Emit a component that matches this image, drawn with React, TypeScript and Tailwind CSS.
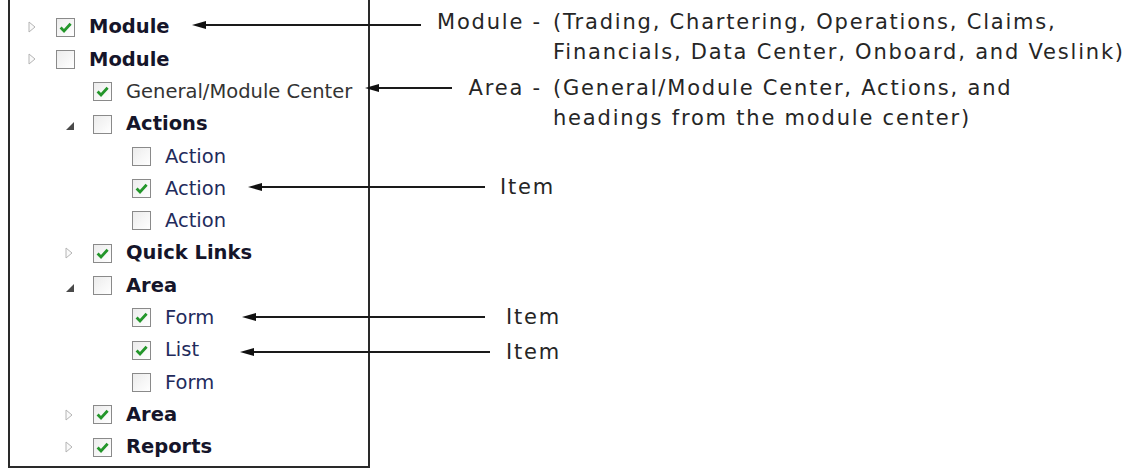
import React from "react";

type Node = {
  label: string;
  level: 0 | 1 | 2;
  checked: boolean;
  toggle?: "closed" | "open";
  bold?: boolean;
  tone?: "navy" | "gray";
};

const rows: Node[] = [
  { label: "Module", level: 0, checked: true, toggle: "closed", bold: true },
  { label: "Module", level: 0, checked: false, toggle: "closed", bold: true },
  { label: "General/Module Center", level: 1, checked: true, tone: "gray" },
  { label: "Actions", level: 1, checked: false, toggle: "open", bold: true },
  { label: "Action", level: 2, checked: false, tone: "navy" },
  { label: "Action", level: 2, checked: true, tone: "navy" },
  { label: "Action", level: 2, checked: false, tone: "navy" },
  { label: "Quick Links", level: 1, checked: true, toggle: "closed", bold: true },
  { label: "Area", level: 1, checked: false, toggle: "open", bold: true },
  { label: "Form", level: 2, checked: true, tone: "navy" },
  { label: "List", level: 2, checked: true, tone: "navy" },
  { label: "Form", level: 2, checked: false, tone: "navy" },
  { label: "Area", level: 1, checked: true, toggle: "closed", bold: true },
  { label: "Reports", level: 1, checked: true, toggle: "closed", bold: true },
];

const indent = ["pl-[18px]", "pl-[55px]", "pl-[94px]"];

const Toggle = ({ state }: { state?: "closed" | "open" }) => (
  <span className="w-[28px] shrink-0 flex items-center">
    {state === "closed" && (
      <svg width="8" height="12" viewBox="0 0 8 12">
        <path d="M1 1 L7 6 L1 11 Z" fill="#fafafa" stroke="#b4b4b4" strokeWidth="1" />
      </svg>
    )}
    {state === "open" && (
      <svg width="10" height="10" viewBox="0 0 10 10" className="mt-[4px]">
        <path d="M9 1 L9 9 L1 9 Z" fill="#4a4a4a" />
      </svg>
    )}
  </span>
);

const Check = ({ checked }: { checked: boolean }) => (
  <span className="w-[19px] h-[19px] shrink-0 border border-[#8a8a8a] bg-gradient-to-br from-[#ececec] to-white flex items-center justify-center">
    {checked && (
      <svg width="15" height="15" viewBox="0 0 15 15">
        <path d="M2.6 7.6 L6 11 L12.6 3.8" fill="none" stroke="#23962a" strokeWidth="2.8" />
      </svg>
    )}
  </span>
);

const TreeRow = ({ node }: { node: Node }) => (
  <div className={`h-[32.3px] flex items-center ${indent[node.level]}`}>
    <Toggle state={node.toggle} />
    <Check checked={node.checked} />
    <span
      className={`ml-[14px] text-[19.5px] leading-none whitespace-nowrap ${
        node.bold
          ? "font-bold text-[#15152a]"
          : node.tone === "gray"
          ? "text-[#333333]"
          : "text-[#1f2b5c]"
      }`}
    >
      {node.label}
    </span>
  </div>
);

const arrows = [
  { y: 25, tip: 192, end: 421 },
  { y: 88, tip: 365, end: 452 },
  { y: 187, tip: 248, end: 485 },
  { y: 317, tip: 242, end: 485 },
  { y: 352, tip: 240, end: 490 },
];

const Arrows = () => (
  <svg className="absolute inset-0 pointer-events-none" width="1137" height="470">
    {arrows.map((a) => (
      <g key={a.y}>
        <line x1={a.tip + 8} y1={a.y} x2={a.end} y2={a.y} stroke="#1a1a1a" strokeWidth="2" />
        <path d={`M${a.tip} ${a.y} L${a.tip + 14} ${a.y - 4} L${a.tip + 14} ${a.y + 4} Z`} fill="#111" />
      </g>
    ))}
  </svg>
);

const Callout = ({ label, lines, top }: { label: string; lines: string[]; top: string }) => (
  <div className={`absolute left-[420px] ${top} flex text-[21px] leading-[30px] tracking-[1.8px] text-[#262626]`}>
    <span className="w-[122px] text-right whitespace-nowrap">{label}</span>
    <div className="ml-[11px] whitespace-nowrap">
      {lines.map((l) => (
        <div key={l}>{l}</div>
      ))}
    </div>
  </div>
);

const ItemTag = ({ top, left }: { top: string; left: string }) => (
  <span className={`absolute ${top} ${left} text-[21px] leading-[30px] tracking-[1.8px] text-[#262626]`}>
    Item
  </span>
);

export default function App() {
  return (
    <div
      className="relative w-[1137px] h-[470px] bg-white overflow-hidden"
      style={{ fontFamily: '"DejaVu Sans", Verdana, sans-serif' }}
    >
      <div className="ml-[8px] w-[362px] h-[468px] border-x-2 border-b-2 border-[#2a2a2a] pt-[11px]">
        {rows.map((n, i) => (
          <TreeRow key={i} node={n} />
        ))}
      </div>

      <Arrows />

      <Callout
        top="top-[7px]"
        label="Module -"
        lines={["(Trading, Chartering, Operations, Claims,", "Financials, Data Center, Onboard, and Veslink)"]}
      />
      <Callout
        top="top-[73px]"
        label="Area -"
        lines={["(General/Module Center, Actions, and", "headings from the module center)"]}
      />
      <ItemTag top="top-[172px]" left="left-[500px]" />
      <ItemTag top="top-[302px]" left="left-[506px]" />
      <ItemTag top="top-[337px]" left="left-[506px]" />
    </div>
  );
}
